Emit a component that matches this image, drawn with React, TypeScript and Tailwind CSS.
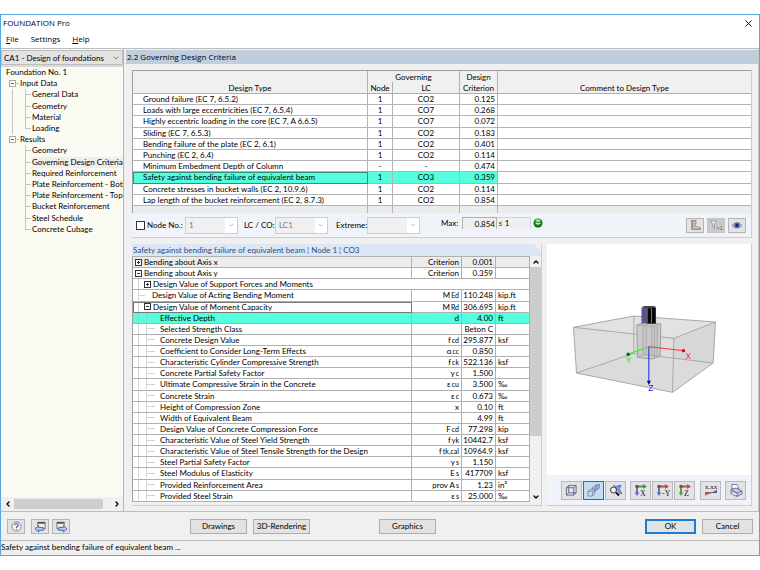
import type { ReactNode } from 'react';
import clsx from 'clsx';
import { ChevronDown, ChevronLeft, ChevronRight, ChevronUp, X } from 'lucide-react';

type TreeRow = { label: string; level: 0 | 1 | 2; trunk?: boolean; last?: boolean; active?: boolean };

const TREE: TreeRow[] = [
  { label: 'Foundation No. 1', level: 0 },
  { label: 'Input Data', level: 1 },
  { label: 'General Data', level: 2, trunk: true },
  { label: 'Geometry', level: 2, trunk: true },
  { label: 'Material', level: 2, trunk: true },
  { label: 'Loading', level: 2, trunk: true, last: true },
  { label: 'Results', level: 1 },
  { label: 'Geometry', level: 2 },
  { label: 'Governing Design Criteria', level: 2, active: true },
  { label: 'Required Reinforcement', level: 2 },
  { label: 'Plate Reinforcement - Bottom', level: 2 },
  { label: 'Plate Reinforcement - Top', level: 2 },
  { label: 'Bucket Reinforcement', level: 2 },
  { label: 'Steel Schedule', level: 2 },
  { label: 'Concrete Cubage', level: 2, last: true },
];

const CRITERIA = [
  ['Ground failure (EC 7, 6.5.2)', '1', 'CO2', '0.125'],
  ['Loads with large eccentricities (EC 7, 6.5.4)', '1', 'CO7', '0.268'],
  ['Highly eccentric loading in the core (EC 7, A 6.6.5)', '1', 'CO7', '0.072'],
  ['Sliding (EC 7, 6.5.3)', '1', 'CO2', '0.183'],
  ['Bending failure of the plate (EC 2, 6.1)', '1', 'CO2', '0.401'],
  ['Punching (EC 2, 6.4)', '1', 'CO2', '0.114'],
  ['Minimum Embedment Depth of Column', '-', '-', '0.474'],
  ['Safety against bending failure of equivalent beam', '1', 'CO3', '0.359'],
  ['Concrete stresses in bucket walls (EC 2, 10.9.6)', '1', 'CO2', '0.114'],
  ['Lap length of the bucket reinforcement (EC 2, 8.7.3)', '1', 'CO2', '0.854'],
];

type Detail = {
  level: 0 | 1 | 2;
  label: string;
  box?: '+' | '-';
  sym?: string;
  sub?: string;
  value?: string;
  unit?: string;
};

const DETAILS: Detail[] = [
  { level: 0, box: '+', label: 'Bending about Axis x', sym: 'Criterion', value: '0.001' },
  { level: 0, box: '-', label: 'Bending about Axis y', sym: 'Criterion', value: '0.359' },
  { level: 1, box: '+', label: 'Design Value of Support Forces and Moments' },
  { level: 1, label: 'Design Value of Acting Bending Moment', sym: 'M', sub: 'Ed', value: '110.248', unit: 'kip.ft' },
  { level: 1, box: '-', label: 'Design Value of Moment Capacity', sym: 'M', sub: 'Rd', value: '306.695', unit: 'kip.ft' },
  { level: 2, label: 'Effective Depth', sym: 'd', value: '4.00', unit: 'ft' },
  { level: 2, label: 'Selected Strength Class', value: 'Beton C' },
  { level: 2, label: 'Concrete Design Value', sym: 'f', sub: 'cd', value: '295.877', unit: 'ksf' },
  { level: 2, label: 'Coefficient to Consider Long-Term Effects', sym: 'α', sub: 'cc', value: '0.850' },
  { level: 2, label: 'Characteristic Cylinder Compressive Strength', sym: 'f', sub: 'ck', value: '522.136', unit: 'ksf' },
  { level: 2, label: 'Concrete Partial Safety Factor', sym: 'γ', sub: 'c', value: '1.500' },
  { level: 2, label: 'Ultimate Compressive Strain in the Concrete', sym: 'ε', sub: 'cu', value: '3.500', unit: '‰' },
  { level: 2, label: 'Concrete Strain', sym: 'ε', sub: 'c', value: '0.673', unit: '‰' },
  { level: 2, label: 'Height of Compression Zone', sym: 'x', value: '0.10', unit: 'ft' },
  { level: 2, label: 'Width of Equivalent Beam', value: '4.99', unit: 'ft' },
  { level: 2, label: 'Design Value of Concrete Compression Force', sym: 'F', sub: 'cd', value: '77.298', unit: 'kip' },
  { level: 2, label: 'Characteristic Value of Steel Yield Strength', sym: 'f', sub: 'yk', value: '10442.7', unit: 'ksf' },
  { level: 2, label: 'Characteristic Value of Steel Tensile Strength for the Design', sym: 'f', sub: 'tk,cal', value: '10964.9', unit: 'ksf' },
  { level: 2, label: 'Steel Partial Safety Factor', sym: 'γ', sub: 's', value: '1.150' },
  { level: 2, label: 'Steel Modulus of Elasticity', sym: 'E', sub: 's', value: '417709', unit: 'ksf' },
  { level: 2, label: 'Provided Reinforcement Area', sym: 'prov A', sub: 's', value: '1.23', unit: 'in²' },
  { level: 2, label: 'Provided Steel Strain', sym: 'ε', sub: 's', value: '25.000', unit: '‰' },
];

const SELECTED_CRITERION = 7;
const SELECTED_DETAIL = 5;

function Toggle({ open, dark }: { open: boolean; dark?: boolean }) {
  return (
    <svg viewBox="0 0 7 7" className={clsx('h-[7px] w-[7px] shrink-0', dark ? 'text-[#333]' : 'text-[#aaa]')} aria-hidden="true">
      <rect x=".5" y=".5" width="6" height="6" fill="#fff" stroke="currentColor" />
      <path d={open ? 'M2 3.5h3' : 'M2 3.5h3M3.5 2v3'} stroke={dark ? '#333' : '#4a5f91'} />
    </svg>
  );
}

function TreeItem({ row }: { row: TreeRow }) {
  if (row.level === 0) {
    return <li className="flex items-center pl-[5px]">{row.label}</li>;
  }
  if (row.level === 1) {
    return (
      <li className="flex items-center pl-2">
        <Toggle open />
        <span className="mr-px h-px w-[3px] bg-[#c4c4c4]" />
        {row.label}
      </li>
    );
  }
  return (
    <li className="flex items-stretch overflow-hidden pl-[11px]">
      <span className={clsx('w-[13px] shrink-0 border-l', row.trunk ? 'border-[#c4c4c4]' : 'border-transparent')} />
      <span className="flex w-[6px] shrink-0 flex-col">
        <span className="h-[6px] border-b border-l border-[#c4c4c4]" />
        {!row.last && <span className="flex-1 border-l border-[#c4c4c4]" />}
      </span>
      <a href="#" className={clsx('ml-px flex items-center whitespace-nowrap', row.active && 'bg-[#eeeeee]')}>
        {row.label}
      </a>
    </li>
  );
}

function Sidebar() {
  return (
    <aside className="flex w-[123px] shrink-0 flex-col border-r border-[#b4b4b4] bg-[#fcfbf3]">
      <label className="relative mt-px block">
        <select aria-label="Design case" className="block h-[15px] w-full appearance-none border border-[#bdbdbd] bg-[#e2e2e2] pl-[2px] text-[8px]">
          <option>CA1 - Design of foundations</option>
        </select>
        <ChevronDown className="absolute top-1 right-[3px] h-2 w-2 text-[#444]" />
      </label>
      <div className="h-[2px] bg-[#d9d9d9]" />
      <ul className="grid h-[168px] auto-rows-fr text-[8px] leading-[11px]">
        {TREE.map((row, i) => (
          <TreeItem key={i} row={row} />
        ))}
      </ul>
      <div className="mt-auto flex h-[14px] items-center bg-[#f0f0f0]">
        <button aria-label="Scroll left" className="flex w-[13px] justify-center">
          <ChevronLeft className="h-2 w-2" strokeWidth={4} />
        </button>
        <div className="flex-1">
          <div className="h-[10px] w-[89px] bg-[#cdcdcd]" />
        </div>
        <button aria-label="Scroll right" className="flex w-[13px] justify-center">
          <ChevronRight className="h-2 w-2" strokeWidth={4} />
        </button>
      </div>
    </aside>
  );
}

function CriteriaTable() {
  const head = 'border-r border-[#b0b0b0] font-normal';
  return (
    <table className="h-[143px] w-full table-fixed border-separate border-spacing-0 border-t border-l border-[#a0a0a0] text-[8px] leading-[10px]">
      <colgroup>
        <col className="w-[235px]" />
        <col className="w-[25px]" />
        <col className="w-[67px]" />
        <col className="w-[38px]" />
        <col />
      </colgroup>
      <thead className="bg-[#f0f0f0]">
        <tr className="h-[11px]">
          <th rowSpan={2} className={clsx(head, 'border-b align-bottom')}>Design Type</th>
          <th colSpan={2} className={head}>Governing</th>
          <th className={head}>Design</th>
          <th rowSpan={2} className="border-b border-[#b0b0b0] align-bottom font-normal">Comment to Design Type</th>
        </tr>
        <tr className="h-[12px]">
          <th className={clsx(head, 'border-b')}>Node</th>
          <th className={clsx(head, 'border-b')}>LC</th>
          <th className={clsx(head, 'border-b')}>Criterion</th>
        </tr>
      </thead>
      <tbody>
        {CRITERIA.map(([name, node, lc, value], i) => {
          const on = i === SELECTED_CRITERION;
          const cell = clsx('border-r border-b border-[#b4b4b4]', on ? 'bg-[#55ffdd]' : 'bg-white');
          return (
            <tr key={name} className="text-center">
              <td className={clsx(cell, 'pl-[10px] text-left', on && 'outline -outline-offset-1 outline-[#3c8b7b]')}>{name}</td>
              <td className={cell}>{node}</td>
              <td className={cell}>{lc}</td>
              <td className={clsx(cell, 'pr-[2px] text-right')}>{value}</td>
              <td className="border-b border-[#b4b4b4] bg-white" />
            </tr>
          );
        })}
        <tr className="h-[7px] bg-[#e9eded]">
          <td className="border-r border-[#b4b4b4]" />
          <td className="border-r border-[#b4b4b4]" />
          <td className="border-r border-[#b4b4b4]" />
          <td className="border-r border-[#b4b4b4]" />
          <td />
        </tr>
      </tbody>
    </table>
  );
}

function Combo({ id, value }: { id: string; value: string }) {
  return (
    <div className="relative w-[53px] shrink-0">
      <select id={id} disabled className="block h-[17px] w-full appearance-none border border-[#cfcfcf] bg-[#f0f0f0] pl-[3px] text-[8px] text-[#7a7a7a] opacity-100">
        <option>{value}</option>
      </select>
      <span className="pointer-events-none absolute inset-y-px right-px flex w-3 items-center justify-center bg-white">
        <ChevronDown className="h-2 w-2 text-[#a8a8a8]" />
      </span>
    </div>
  );
}

function IconButton({ label, className, children }: { label: string; className?: string; children: ReactNode }) {
  return (
    <button aria-label={label} className={clsx('flex shrink-0 items-center justify-center border', className ?? 'h-[15px] w-[18px] border-[#b5b5b5] bg-[#e3e3e3]')}>
      {children}
    </button>
  );
}

function FilterBar() {
  return (
    <div className="flex h-[24px] items-center bg-[#f0f4fa] pr-[5px] pl-1 text-[8px]">
      <input id="node-filter" type="checkbox" className="h-[9px] w-[9px] appearance-none border border-[#333] bg-white" />
      <label htmlFor="node-filter" className="ml-[2px] w-[38px] whitespace-nowrap">Node No.:</label>
      <Combo id="node" value="1" />
      <label htmlFor="lc" className="ml-[6px] w-[31px] whitespace-nowrap">LC / CO:</label>
      <Combo id="lc" value="LC1" />
      <label htmlFor="extreme" className="ml-[8px] w-[31px] whitespace-nowrap">Extreme:</label>
      <Combo id="extreme" value="" />
      <label htmlFor="max" className="mb-1 ml-[21px] w-[21px]">Max:</label>
      <input id="max" readOnly defaultValue="0.854" className="mb-1 h-3 w-[35px] border-t border-r border-l border-[#b0b0b0] bg-[#f0f0f0] pr-px text-right" />
      <output className="mb-1 h-3 w-[34px] border-t border-r border-[#d4d4d4] bg-[#f0f0f0] pl-px leading-[11px]">≤ 1</output>
      <svg viewBox="0 0 10 10" className="mb-1 ml-[2px] h-[10px] w-[10px]" role="img" aria-label="Passed">
        <circle cx="5" cy="5" r="4.5" fill="#075f0b" />
        <circle cx="5" cy="4.4" r="3.5" fill="#27a02b" />
        <ellipse cx="5" cy="2.6" rx="2.4" ry="1.3" fill="#9be69b" />
        <path d="M2.8 5.2q2.2 1.6 4.4 0" fill="none" stroke="#e8ffe8" strokeWidth="1" />
      </svg>
      <div className="ml-auto flex gap-[3px]">
        <IconButton label="Result diagram">
          <svg viewBox="0 0 14 13" className="h-[12px] w-[13px]">
            <path d="M3 1v10.500" stroke="#68a36f" strokeWidth="1.500" />
            <path d="M4 1.500h4L6 4h2L6 7l6.500 2.500v2H4z" fill="#c8a4a8" stroke="#77696a" strokeWidth=".6" />
            <path d="M4 4h3M4 6.500h2M4 9h6" stroke="#f0e2e2" strokeWidth=".8" />
          </svg>
        </IconButton>
        <IconButton label="Show exceeded only" className="h-[15px] w-[18px] border-[#c4c4c4] bg-[#cbcbcb]">
          <svg viewBox="0 0 15 12" className="h-[12px] w-[15px]">
            <path d="M1 2h7L5.500 5v4.500L3.800 8V5z" fill="#eeeeee" stroke="#8f8f8f" strokeWidth=".8" />
            <text x="7" y="10.500" fontFamily="Liberation Sans, sans-serif" fontSize="6" fill="#666">&gt;1</text>
          </svg>
        </IconButton>
        <IconButton label="View mode">
          <svg viewBox="0 0 12 9" className="h-[9px] w-[12px]">
            <path d="M1 4.500Q6-1 11 4.500Q6 9.500 1 4.500z" fill="#d9dcec" stroke="#556" strokeWidth=".7" />
            <circle cx="6" cy="4.300" r="2.800" fill="#4665cd" />
            <circle cx="6" cy="4.300" r="1.300" fill="#101a50" />
          </svg>
        </IconButton>
      </div>
    </div>
  );
}

function DetailName({ row, selected }: { row: Detail; selected: boolean }) {
  const line = selected ? 'border-[#7adfc9]' : 'border-[#d4d4d4]';
  return (
    <div className="flex h-[10px] items-center overflow-hidden whitespace-nowrap">
      {row.level === 0 && <span className="w-[2px]" />}
      {row.level > 0 && <span className={clsx('ml-[5px] h-full w-[6px] shrink-0 border-l', line)} />}
      {row.level === 2 && <span className={clsx('ml-[2px] h-full w-[1px] shrink-0 border-l', line)} />}
      {row.level === 2 && <span className={clsx('mr-[5px] w-[8px] shrink-0 border-t', line)} />}
      {row.level === 1 && !row.box && <span className={clsx('mr-[7px] -ml-[5px] w-[6px] shrink-0 border-t', line)} />}
      {row.box && <Toggle dark open={row.box === '-'} />}
      <span className={row.box && 'ml-[2px]'}>{row.label}</span>
    </div>
  );
}

function DetailTable() {
  return (
    <section className="flex min-w-0 flex-1 flex-col border-r border-b border-[#c9caf2]">
      <h2 className="h-[12px] bg-[#dce6f4] pl-px text-[8px] leading-[12px] text-[#2c4c7c] [clip-path:polygon(0_0,calc(100%-7px)_0,100%_7px,100%_100%,0_100%)]">
        Safety against bending failure of equivalent beam ¦ Node 1 ¦ CO3
      </h2>
      <div className="flex">
        <div className="min-w-0 flex-1">
          <table className="h-[246px] w-full table-fixed border-separate border-spacing-0 border-l border-[#a0a0a0] bg-white text-[8px] leading-[10px]">
            <colgroup>
              <col />
              <col className="w-[50px]" />
              <col className="w-[34px]" />
              <col className="w-[34px]" />
            </colgroup>
            <tbody>
              {DETAILS.map((row, i) => {
                const on = i === SELECTED_DETAIL;
                const cell = clsx('border-b border-[#b0b0b0] p-0', on && 'bg-[#55ffdd]', i === 0 && 'border-t bg-[#ececec]');
                if (!row.sym && !row.value) {
                  return (
                    <tr key={row.label}>
                      <td colSpan={4} className={clsx(cell, 'border-r')}><DetailName row={row} selected={false} /></td>
                    </tr>
                  );
                }
                return (
                  <tr key={row.label}>
                    <td className={clsx(cell, 'border-r', i === 4 && 'outline -outline-offset-1 outline-[#777]')}>
                      <DetailName row={row} selected={on} />
                    </td>
                    <td className={clsx(cell, 'border-r pr-[2px] text-right whitespace-nowrap')}>
                      {row.sym}
                      {row.sub && <span className="ml-px text-[7px] leading-none">{row.sub}</span>}
                    </td>
                    <td className={clsx(cell, 'border-r pr-[2px] text-right whitespace-nowrap')}>{row.value}</td>
                    <td className={clsx(cell, 'border-r pl-[2px] whitespace-nowrap')}>{row.unit}</td>
                  </tr>
                );
              })}
            </tbody>
          </table>
        </div>
        <div className="flex w-[11px] flex-col items-center bg-[#f0f0f0]">
          <button aria-label="Scroll up" className="flex h-[11px] items-center"><ChevronUp className="h-2 w-2" strokeWidth={4} /></button>
          <div className="h-[169px] w-full bg-[#cdcdcd]" />
          <button aria-label="Scroll down" className="mt-auto flex h-[11px] items-center"><ChevronDown className="h-2 w-2" strokeWidth={4} /></button>
        </div>
      </div>
      <div className="h-[3px]" />
    </section>
  );
}

function FoundationModel() {
  return (
    <svg viewBox="6 -138 609 693" className="h-[231px] w-full" role="img" aria-label="3D view of the foundation">
      <path d="M84 112L265 78L510 96L503 219L381 307L93 249z" fill="#e2e2e2" />
      <path d="M84 112L385 145L381 307L93 249z" fill="#dedede" />
      <path d="M385 145L510 96L503 219L381 307z" fill="#d7d7d7" />
      <path d="M93 249L265 190L503 219L381 307z" fill="#dbdbdb" />
      <g fill="none" stroke="#a9a9a9" strokeWidth="3">
        <path d="M84 112L265 78L510 96L385 145zM84 112L93 249L381 307L503 219L510 96M385 145L381 307M265 78V190M93 249L265 190L503 219" />
      </g>
      <path d="M274 105L293 98L346 102L344 199L318 207L276 202z" fill="#c9c9c9" stroke="#a0a0a0" strokeWidth="3" />
      <path d="M274 105L327 109L346 102M327 109V207M293 98V193M302 102V192M319 103V193M335 106V200M276 202L293 193L344 199" fill="none" stroke="#aaaaaa" strokeWidth="3" />
      <path d="M288 52h15v48h-15z" fill="#555394" />
      <path d="M303 52h28v49h-28z" fill="#080808" />
      <path d="M305 52v48M318 52v48" stroke="#777" strokeWidth="3" />
      <path d="M288 52L296 48H327L331 52L318 55H303z" fill="#45454b" />
      <path d="M310 170L414 182" stroke="#ff3030" strokeWidth="3" />
      <circle cx="414" cy="182" r="5" fill="#d00" />
      <path d="M310 170L249 192" stroke="#28ee28" strokeWidth="3" />
      <circle cx="248" cy="193" r="5.500" fill="#08740d" />
      <path d="M310 170V278" stroke="#2222e8" strokeWidth="3" />
      <path d="M304 272h12l-6 13z" fill="#0000a0" />
      <g fontFamily="Liberation Sans, sans-serif" fontSize="25">
        <text x="420" y="207" fill="#ff2929">X</text>
        <text x="241" y="218" fill="#27e327">Y</text>
        <text x="308" y="303" fill="#2626ff">Z</text>
      </g>
    </svg>
  );
}

function AxisIcon({ axis, side, down }: { axis: string; side: string; down: string }) {
  return (
    <svg viewBox="0 0 16 14" className="h-[14px] w-[16px]">
      <path d="M4 3.500h7" stroke={side} strokeWidth="2" />
      <path d="M10 1l4 2.500L10 6z" fill={side} />
      <path d="M4 3v7" stroke={down} strokeWidth="2" />
      <path d="M1.500 9.500h5L4 13z" fill={down} />
      <circle cx="4" cy="3.500" r="1.800" fill="#8a4b3a" />
      <text x="7" y="12.500" fontFamily="Liberation Serif, serif" fontSize="8" fill="#222">{axis}</text>
    </svg>
  );
}

function ModelView() {
  const box = 'h-[19px] w-[21px] border-[#b9b9b9] bg-[#e3e3e3]';
  return (
    <section className="flex w-[205px] shrink-0 flex-col border-r border-b border-[#c9caf2] bg-white">
      <FoundationModel />
      <div className="flex flex-1 items-center justify-end bg-[#f0f4fa] pr-[5px]">
        <div className="flex gap-px">
          <IconButton label="Wireframe" className={box}>
            <svg viewBox="0 0 14 14" className="h-[13px] w-[13px]" fill="none" stroke="#4c5c83" strokeWidth=".9">
              <path d="M1.500 4h8v8h-8zM4 1.500h8v8H4zM1.500 4L4 1.500M9.500 4L12 1.500M9.500 12L12 9.500M1.500 12L4 9.500" />
            </svg>
          </IconButton>
          <IconButton label="Solid" className="h-[19px] w-[21px] border-[#2d6da3] bg-[#c3ddf3]">
            <svg viewBox="0 0 14 14" className="h-[13px] w-[13px]" fill="#cfd6e8" stroke="#60719c" strokeWidth=".7">
              <path d="M8.500 2L10 .5h3.500V4L12 5.500H8.500zM8.500 2H12v3.500M12 2l1.500-1.500" />
              <path d="M5.500 4.500L7 3h3.500v3.500L9 8H5.500zM5.500 4.500H9V8M9 4.500L10.500 3" />
              <path d="M1 8l2-2h5v5l-2 2H1zM1 8h5v5M6 8l2-2" />
            </svg>
          </IconButton>
          <IconButton label="Zoom" className={box}>
            <svg viewBox="0 0 14 14" className="h-[14px] w-[14px]" fill="none">
              <path d="M4 2.500l3 1 5-1.500-1.500 4.500L13 11l-3.500-1.500" fill="#7f9bd6" stroke="#4468b4" strokeWidth=".8" />
              <circle cx="4.500" cy="7" r="3" fill="#edf0f6" stroke="#333" />
              <path d="M7 9.500L10 12.500" stroke="#111" strokeWidth="2" />
            </svg>
          </IconButton>
        </div>
        <div className="ml-1 flex gap-px">
          <IconButton label="View in X" className={box}><AxisIcon axis="X" side="#399c49" down="#6270d1" /></IconButton>
          <IconButton label="View in -Y" className={box}><AxisIcon axis="-Y" side="#c04955" down="#6270d1" /></IconButton>
          <IconButton label="View in Z" className={box}><AxisIcon axis="Z" side="#c04955" down="#43a954" /></IconButton>
        </div>
        <div className="ml-[5px] flex gap-1">
          <IconButton label="Show values" className={box}>
            <svg viewBox="0 0 16 14" className="h-[14px] w-[16px]">
              <text x="2" y="6" fontFamily="Liberation Serif, serif" fontSize="7" fill="#222">x.xx</text>
              <path d="M2 9v3.500l7-2.500z" fill="#d45151" />
              <path d="M8 10l6-3.500V10z" fill="#5367d3" />
              <path d="M2 9.500h12" stroke="#555" strokeWidth=".7" />
            </svg>
          </IconButton>
          <IconButton label="Print" className={box}>
            <svg viewBox="0 0 14 14" className="h-[14px] w-[14px]" stroke="#5a658c" strokeWidth=".8">
              <path d="M3 6V1.500h5L10 6z" fill="#fff" />
              <path d="M2 6.500L7 5l6 3v3l-5 2.500-6-3.500z" fill="#c6cce0" />
              <path d="M2 6.500l6 3.500 5-2M8 10v3.500" fill="none" />
              <path d="M4 8.500l5 2.500-2 2-5-2.500z" fill="#f8f8ff" />
            </svg>
          </IconButton>
        </div>
      </div>
    </section>
  );
}

function Footer() {
  const btn = 'h-[15px] w-[57px] border border-[#adadad] bg-[#e2e2e2] text-[8px] leading-[13px] whitespace-nowrap';
  return (
    <footer className="flex h-[28px] items-center px-[6px] pt-px">
      <IconButton label="Help">
        <svg viewBox="0 0 14 13" className="h-[12px] w-[13px]">
          <circle cx="7" cy="6" r="5" fill="#fafafa" stroke="#777" />
          <path d="M5 4.500Q5 3 7 3t2 1.500Q9 5.500 7 6.500v1M7 8.500v1" fill="none" stroke="#415da5" strokeWidth="1.300" />
        </svg>
      </IconButton>
      <div className="ml-[6px] flex gap-[3px]">
        <IconButton label="Previous table">
          <svg viewBox="0 0 14 13" className="h-[12px] w-[13px]">
            <path d="M4 1.500h8v7H4z" fill="#eee" stroke="#777" />
            <path d="M4 2h8" stroke="#555" strokeWidth="2" />
            <path d="M1 8.500L5 5v2h5v3H5v2z" fill="#b7caf4" stroke="#2e51a4" strokeWidth=".9" />
          </svg>
        </IconButton>
        <IconButton label="Next table">
          <svg viewBox="0 0 14 13" className="h-[12px] w-[13px]">
            <path d="M2 1.500h8v7H2z" fill="#eee" stroke="#777" />
            <path d="M2 2h8" stroke="#555" strokeWidth="2" />
            <path d="M13 8.500L9 5v2H4v3h5v2z" fill="#b7caf4" stroke="#2e51a4" strokeWidth=".9" />
          </svg>
        </IconButton>
      </div>
      <div className="ml-[120px] flex gap-[6px]">
        <button className={btn}>Drawings</button>
        <button className={btn}>3D-Rendering</button>
      </div>
      <button className={clsx(btn, 'ml-[69px]')}>Graphics</button>
      <div className="ml-auto flex gap-[6px]">
        <button className="h-[15px] w-[51px] border-2 border-[#1a7fd4] bg-[#e2e2e2] text-[8px] leading-[11px]">OK</button>
        <button className="h-[15px] w-[51px] border border-[#adadad] bg-[#e2e2e2] text-[8px] leading-[13px]">Cancel</button>
      </div>
    </footer>
  );
}

export default function App() {
  return (
    <div className="min-h-screen bg-white pt-[14px] font-['Lato','Liberation_Sans',Arial,sans-serif] text-black">
      <main className="flex flex-col border border-[#55a8e2] bg-[#f0f0f0]">
        <header className="bg-white font-['Open_Sans','Noto_Sans',sans-serif]">
          <div className="flex h-[16px] items-center justify-between pr-[5px] pl-[2px]">
            <h1 className="text-[8px]">FOUNDATION Pro</h1>
            <button aria-label="Close"><X className="h-[11px] w-[11px]" strokeWidth={2} /></button>
          </div>
          <nav className="flex h-[17px] items-center gap-[12px] pb-[2px] pl-[5px] text-[8px]">
            <a href="#"><u>F</u>ile</a>
            <a href="#">Settings</a>
            <a href="#"><u>H</u>elp</a>
          </nav>
        </header>
        <div className="flex gap-[2px] border-t border-b border-[#bdbdbd]">
          <Sidebar />
          <div className="flex min-w-0 flex-1 flex-col border-r border-[#c8c8c8] pt-px">
            <h2 className="h-[14px] bg-[#bfcddc] pl-px font-['Open_Sans','Noto_Sans',sans-serif] text-[8px] leading-[14px]">2.2 Governing Design Criteria</h2>
            <div className="px-[6px] pt-[6px] pb-[5px]">
              <section className="border-r border-b border-[#c9caf2]">
                <CriteriaTable />
                <FilterBar />
              </section>
              <div className="mt-[6px] flex gap-[5px]">
                <DetailTable />
                <ModelView />
              </div>
            </div>
          </div>
        </div>
        <Footer />
        <div className="h-[15px] border-t border-[#bdbdbd] text-[8px] leading-[13px]">Safety against bending failure of equivalent beam ...</div>
      </main>
    </div>
  );
}
